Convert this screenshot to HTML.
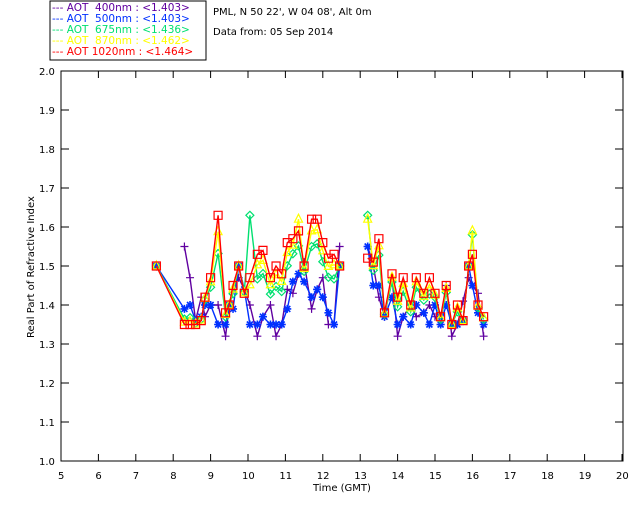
<!DOCTYPE html>
<html><head><meta charset="utf-8"><style>
body{margin:0;background:#fff;width:640px;height:512px;overflow:hidden;font-family:"DejaVu Sans","Liberation Sans",sans-serif}
svg{position:absolute;left:0;top:0}
</style></head><body>
<svg id="s" width="640" height="512" xmlns="http://www.w3.org/2000/svg" font-family="DejaVu Sans, Liberation Sans, sans-serif" font-size="10">
<rect x="50" y="1" width="156" height="59" fill="none" stroke="#000"/>
<g font-size="10.5">
<text x="52" y="11" fill="#6000a0">---&#160;AOT&#160;&#160;400nm&#160;:&#160;&lt;1.403&gt;</text>
<text x="52" y="22" fill="#0030ff">---&#160;AOT&#160;&#160;500nm&#160;:&#160;&lt;1.403&gt;</text>
<text x="52" y="33" fill="#00e070">---&#160;AOT&#160;&#160;675nm&#160;:&#160;&lt;1.436&gt;</text>
<text x="52" y="44" fill="#ffff00">---&#160;AOT&#160;&#160;870nm&#160;:&#160;&lt;1.462&gt;</text>
<text x="52" y="55" fill="#ff0000">---&#160;AOT&#160;1020nm&#160;:&#160;&lt;1.464&gt;</text>
</g>
<text x="213" y="15" fill="#000">PML, N 50 22', W 04 08', Alt 0m</text>
<text x="213" y="35" fill="#000">Data from: 05 Sep 2014</text>
<text x="313" y="491" fill="#000">Time (GMT)</text>
<text transform="translate(34,338) rotate(-90)" fill="#000">Real Part of Refractive Index</text>
<g id="ax" stroke="#000" fill="none"></g>
<g id="lab" fill="#000" font-size="10"></g>
<g id="data" fill="none" stroke-width="1.4"></g>
</svg>
<script>
var NS="http://www.w3.org/2000/svg";
function X(t){return 61+(t-5)*37.4}
function Y(v){return 461-(v-1)*390}
function el(p,n,a,txt){var e=document.createElementNS(NS,n);for(var k in a)e.setAttribute(k,a[k]);if(txt)e.textContent=txt;document.getElementById(p).appendChild(e);return e}
var d="M61,71 H623 V461 H61 Z";
for(var t=5;t<=20;t++){var x=X(t);d+=" M"+x+",461 v-7 M"+x+",71 v7";el("lab","text",{x:x-(t>=10?6:3),y:479},String(t));}
for(var i=0;i<=10;i++){var v=1+i/10,y=Y(v);d+=" M61,"+y+" h8 M623,"+y+" h-8";el("lab","text",{x:39,y:y+4},v.toFixed(1));}
el("ax","path",{d:d});
var T=[7.55,8.3,8.45,8.6,8.75,8.85,9.0,9.2,9.4,9.5,9.6,9.75,9.9,10.05,10.25,10.4,10.6,10.75,10.9,11.05,11.2,11.35,11.5,11.7,11.85,12.0,12.15,12.3,12.45,null,13.2,13.35,13.5,13.65,13.85,14.0,14.15,14.35,14.5,14.7,14.85,15.0,15.15,15.3,15.45,15.6,15.75,15.9,16.0,16.15,16.3];
var R=[1.50,1.35,1.35,1.35,1.36,1.42,1.47,1.63,1.38,1.40,1.45,1.50,1.43,1.47,1.53,1.54,1.47,1.50,1.48,1.56,1.57,1.59,1.50,1.62,1.62,1.56,1.52,1.53,1.50,0,1.52,1.51,1.57,1.38,1.48,1.42,1.47,1.40,1.47,1.43,1.47,1.43,1.37,1.45,1.35,1.40,1.36,1.50,1.53,1.40,1.37];
var B=[1.50,1.39,1.40,1.36,1.37,1.40,1.40,1.35,1.35,1.40,1.39,1.50,1.44,1.35,1.35,1.37,1.35,1.35,1.35,1.39,1.46,1.48,1.46,1.42,1.44,1.42,1.38,1.35,1.50,0,1.55,1.45,1.45,1.37,1.42,1.35,1.37,1.35,1.40,1.38,1.35,1.40,1.35,1.40,1.35,1.35,1.36,1.50,1.45,1.38,1.35];
var G=[],Yl=[],P=[];
for(var i=0;i<T.length;i++){G.push(B[i]+0.65*(R[i]-B[i]));Yl.push(B[i]+0.85*(R[i]-B[i]));P.push(B[i]+(i%3==1?0.05:(i%3==2?-0.03:0)));}
G[13]=1.63;G[28]=1.50;G[30]=1.63;G[48]=1.58;Yl[21]=1.62;Yl[30]=1.62;Yl[48]=1.59;P[1]=1.55;P[2]=1.47;P[0]=null;
function series(vals,col,mk){
 var d="",pen=false;
 for(var i=0;i<T.length;i++){if(T[i]===null||vals[i]===null){pen=false;continue;}var x=X(T[i]),y=Y(vals[i]);d+=(pen?" L":" M")+x.toFixed(1)+","+y.toFixed(1);pen=true;}
 el("data","path",{d:d,stroke:col});
 for(var i=0;i<T.length;i++){if(T[i]===null||vals[i]===null)continue;var x=X(T[i]),y=Y(vals[i]),m;
  if(mk=="plus")m="M"+(x-4)+","+y+"h8M"+x+","+(y-4)+"v8";
  else if(mk=="star")m="M"+(x-4)+","+y+"h8M"+x+","+(y-4)+"v8M"+(x-3)+","+(y-3)+"l6,6M"+(x-3)+","+(y+3)+"l6,-6";
  else if(mk=="dia")m="M"+x+","+(y-4)+"l4,4l-4,4l-4,-4z";
  else if(mk=="tri")m="M"+x+","+(y-5)+"l4,8h-8z";
  else m="M"+(x-4)+","+(y-4)+"h8v8h-8z";
  el("data","path",{d:m,stroke:col,"stroke-width":mk=="star"?1.6:1.2});}
}
series(P,"#6000a0","plus");
series(B,"#0030ff","star");
series(G,"#00e070","dia");
series(Yl,"#ffff00","tri");
series(R,"#ff0000","sq");
</script>
</body></html>
